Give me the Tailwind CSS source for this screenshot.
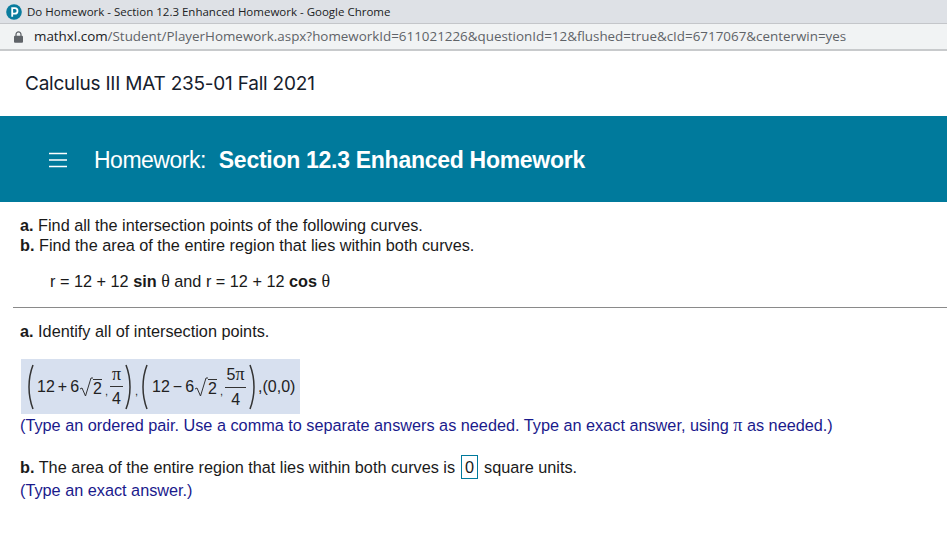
<!DOCTYPE html>
<html><head><meta charset="utf-8"><script src="https://cdn.jsdelivr.net/npm/@tailwindcss/browser@4"></script></head>
<body class="bg-white font-['Liberation_Sans',sans-serif] text-[#1a1a1a] overflow-hidden">
<div class="w-[947px] h-[545px] flex flex-col overflow-hidden">
  <div class="h-[23px] bg-[#dee1e6] flex items-center pl-[6px] gap-[5px] font-['Open_Sans',sans-serif] text-[11.5px] text-[#202124]">
    <svg class="w-[16px] h-[16px]" viewBox="0 0 16 16"><circle cx="8" cy="8" r="7.8" fill="#0a7c9e"/><path d="M6.2 12.8V4.200h2.600a2.700 2.700 0 0 1 0 5.400H6.200" fill="none" stroke="#fff" stroke-width="1.8"/></svg>
    <span>Do Homework - Section 12.3 Enhanced Homework - Google Chrome</span>
  </div>
  <div class="h-[28px] bg-[#f1f3f4] border-t border-b-2 border-t-[#c4c6ca] border-b-[#c8cacc] flex items-center pl-[14px] gap-[11px] font-['Open_Sans',sans-serif] text-[13.4px] text-[#5f6368]">
    <svg class="w-[9px] h-[12px]" viewBox="0 0 9 12"><path d="M2 5V3.400a2.500 2.500 0 0 1 5 0V5" fill="none" stroke="#5f6368" stroke-width="1.2"/><rect y="4.800" width="9" height="7" rx="1" fill="#5f6368"/></svg>
    <span><span class="text-[#202124]">mathxl.com</span>/Student/PlayerHomework.aspx?homeworkId=611021226&amp;questionId=12&amp;flushed=true&amp;cId=6717067&amp;centerwin=yes</span>
  </div>
  <div class="h-[65px] flex items-center pl-[25px] pt-[2px] font-['Inter',sans-serif] text-[19px] tracking-[-0.22px] text-[#16202c]">Calculus III MAT 235-01 Fall 2021</div>
  <div class="h-[86px] bg-[#007a9c] flex items-center pl-[49px] pt-[2px] text-white text-[23px] tracking-[-0.5px]">
    <svg class="w-[18px] h-[16px] mr-[27px]" viewBox="0 0 18 16"><path d="M0 1.500h18M0 8h18M0 14.500h18" stroke="#fff" stroke-width="1.5"/></svg>
    <span>Homework:</span><span class="font-bold ml-[13px] tracking-[-0.28px]">Section 12.3 Enhanced Homework</span>
  </div>
  <div class="pt-[13px] text-[16.25px] leading-[20px]">
    <div class="pl-[20px]">
      <p><b>a.</b> Find all the intersection points of the following curves.</p>
      <p><b>b.</b> Find the area of the entire region that lies within both curves.</p>
      <p class="pl-[30px] mt-[16px]">r = 12 + 12 <b>sin</b> <span class="font-['Liberation_Serif',serif] text-[18px] leading-[0]">θ</span> and r = 12 + 12 <b>cos</b> <span class="font-['Liberation_Serif',serif] text-[18px] leading-[0]">θ</span></p>
    </div>
    <div class="ml-[13px] border-t border-[#8a8a8a] mt-[16px]"></div>
    <div class="pl-[20px]">
      <p class="mt-[13px]"><b>a.</b> Identify all of intersection points.</p>
      <div class="mt-[18px] ml-[1px] w-[279px] h-[55px] bg-[#d7e0ef] flex items-center text-[16px] text-[#222]">
        <svg class="ml-[7px] w-[6px] h-[46px]" viewBox="0 0 6 46"><path d="M5 1C1.500 10 1 16 1 23s.5 13 4 22" fill="none" stroke="#333" stroke-width="1.5"/></svg>
        <span class="ml-[3px]">12</span><span class="mx-[3px]">+</span><span>6</span>
        <svg class="ml-[1px] w-[13px] h-[22px]" viewBox="0 0 13 22"><path d="M0 13l2-1 3.500 8L11 2h2" fill="none" stroke="#333" stroke-width="1"/></svg>
        <span class="border-t border-[#333] leading-[17px] mt-[2px] w-[9px]">2</span><span class="ml-[3px] text-[11px] mt-[8px] w-[3px]">,</span>
        <div class="flex flex-col items-center ml-[2px] w-[13px] leading-[24px]"><span class="font-['Liberation_Serif',serif] text-[18px]">π</span><span class="w-full border-t border-[#333]"></span><span>4</span></div>
        <svg class="ml-[2px] w-[6px] h-[46px]" viewBox="0 0 6 46"><path d="M1 1c3.500 9 4 15 4 22s-.5 13-4 22" fill="none" stroke="#333" stroke-width="1.5"/></svg>
        <span class="text-[11px] mt-[8px] ml-[4px] w-[3px]">,</span>
        <svg class="ml-[4px] w-[6px] h-[46px]" viewBox="0 0 6 46"><path d="M5 1C1.500 10 1 16 1 23s.5 13 4 22" fill="none" stroke="#333" stroke-width="1.5"/></svg>
        <span class="ml-[4px]">12</span><span class="mx-[3px]">−</span><span>6</span>
        <svg class="ml-[1px] w-[13px] h-[22px]" viewBox="0 0 13 22"><path d="M0 13l2-1 3.500 8L11 2h2" fill="none" stroke="#333" stroke-width="1"/></svg>
        <span class="border-t border-[#333] leading-[17px] mt-[2px] w-[9px]">2</span><span class="ml-[3px] text-[11px] mt-[8px] w-[3px]">,</span>
        <div class="flex flex-col items-center ml-[2px] w-[21px] leading-[24px]"><span>5<span class="font-['Liberation_Serif',serif] text-[18px]">π</span></span><span class="w-full border-t border-[#333]"></span><span>4</span></div>
        <svg class="ml-[3px] w-[6px] h-[46px]" viewBox="0 0 6 46"><path d="M1 1c3.500 9 4 15 4 22s-.5 13-4 22" fill="none" stroke="#333" stroke-width="1.5"/></svg>
        <span class="ml-[3px] text-[16px]">,(0,0)</span>
      </div>
      <p class="text-[#1a1a8c] mt-[1px]">(Type an ordered pair. Use a comma to separate answers as needed. Type an exact answer, using <span class="font-['Liberation_Serif',serif] text-[18px] leading-[0]">π</span> as needed.)</p>
      <p class="mt-[20px] flex items-center h-[24px]"><span><b>b.</b> The area of the entire region that lies within both curves is</span><span class="border border-[#007a9c] w-[17px] h-[24px] ml-[6px] mr-[6px] flex items-center justify-center">0</span><span>square units.</span></p>
      <p class="text-[#1a1a8c] mt-[1px]">(Type an exact answer.)</p>
    </div>
  </div>
</div>
</body></html>
